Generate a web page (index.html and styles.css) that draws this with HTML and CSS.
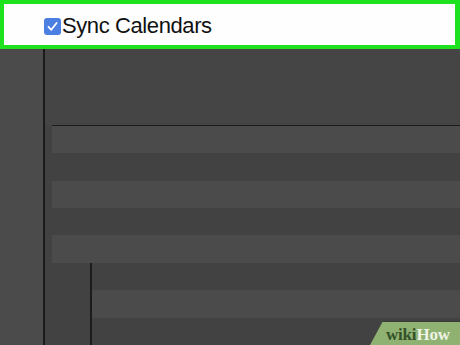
FILE: index.html
```html
<html lang="en">
<head>
  <title>Sync Calendars</title>
  <link rel="stylesheet" href="styles.css">
</head>
<body>
  <header class="sync-bar">
    <label class="sync-option">
      <span class="check">
        <svg width="17" height="17" viewBox="0 0 17 17">
          <path d="M4.5 8.8 L7.3 11.8 L12.6 5" fill="none" stroke="#fff" stroke-width="1.8" stroke-linecap="round" stroke-linejoin="round"/>
        </svg>
      </span>
      <span class="sync-label">Sync Calendars</span>
    </label>
  </header>
  <main class="window">
    <aside class="sidebar"></aside>
    <section class="pane">
      <div class="toolbar"></div>
      <div class="list">
        <div class="rows">
          <div class="row light"></div>
          <div class="row dark"></div>
          <div class="row light"></div>
          <div class="row dark"></div>
          <div class="row light"></div>
        </div>
        <div class="sub">
          <div class="sub-rows">
            <div class="row dark"></div>
            <div class="row light"></div>
            <div class="row dark"></div>
          </div>
        </div>
      </div>
    </section>
    <div class="watermark"><span class="wiki">wiki</span><span class="how">How</span></div>
  </main>
</body>
</html>
```

FILE: styles.css
```css
body {
  margin: 0;
  width: 460px;
  height: 345px;
  overflow: hidden;
  background-color: #444;
  font-family: "Liberation Sans", Arial, sans-serif;
}

.sync-bar {
  box-sizing: border-box;
  height: 49px;
  border: 4px solid #1ee21e;
  border-right-width: 5px;
  background-color: #fefefe;
  display: flex;
  align-items: center;
  padding: 3px 0 0 40px;
}

.sync-option {
  display: flex;
  align-items: center;
  gap: 1px;
}

.check {
  width: 17px;
  height: 17px;
  border-radius: 3px;
  background-color: #4b7fe2;
  display: flex;
}

.sync-label {
  font-size: 22px;
  color: #111;
  letter-spacing: -0.4px;
}

/* dark window under the bar */
.window {
  position: relative;
  display: flex;
  height: 296px;
}

.sidebar {
  width: 43px;
  background-color: #4b4b4b;
}

.pane {
  flex: 1;
  display: flex;
  flex-direction: column;
  border-left: 2px solid #1b1b1b;
  background-color: #444;
}

.toolbar {
  height: 77px;
  background-color: #454545;
}

.list {
  flex: 1;
  padding-left: 7px;
  background-color: #424242;
}

.rows {
  border-top: 1px solid #1c1c1c;
}

.row {
  height: 27.4px;
}

.light {
  background-color: #4b4b4b;
}

.dark {
  background-color: #424242;
}

.sub {
  padding-left: 38px;
}

.sub-rows {
  border-left: 2px solid #1b1b1b;
}

.watermark {
  position: absolute;
  right: 0;
  bottom: 0;
  width: 90px;
  height: 24px;
  box-sizing: border-box;
  padding: 4px 0 0 16px;
  background-color: #8fb171;
  border-top: 1px solid #3a3a3a;
  clip-path: polygon(13px 0, 100% 0, 100% 100%, 0 100%);
  font-family: "Liberation Serif", serif;
  font-weight: bold;
  font-size: 17px;
  line-height: 17px;
  letter-spacing: -0.2px;
}

.wiki {
  color: #34512a;
}

.how {
  color: #eef3e6;
}
```
